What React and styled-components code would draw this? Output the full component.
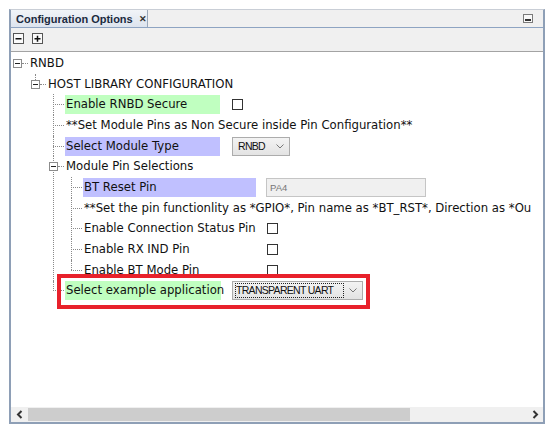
import styled, { createGlobalStyle } from "styled-components";

const GlobalStyle = createGlobalStyle`
  html, body { margin: 0; padding: 0; background: #ffffff; }
  body { font-family: "DejaVu Sans", Verdana, sans-serif; }
  *, *::before, *::after { box-sizing: border-box; }
`;

const Page = styled.div`
  padding: 9px 8px 0 9px;
`;

const Panel = styled.div`
  width: 536px;
  display: flex;
  flex-direction: column;
  border: 2px solid #8e9fb6;
  border-top: 1px solid #c9ced6;
  background: #ffffff;
`;

const Header = styled.div`
  height: 18px;
  display: flex;
  align-items: stretch;
  background: #f0f0f0;
  border-bottom: 1px solid #8ea4c2;
`;

const Tab = styled.div`
  width: 137px;
  display: flex;
  align-items: center;
  padding-left: 5px;
  white-space: nowrap;
  background: linear-gradient(#f1f4f8, #dde4ee);
  border-right: 1px solid #9aa8ba;
  font-family: "Liberation Sans", Arial, sans-serif;
  font-weight: bold;
  font-size: 11px;
  color: #1b2a40;
`;

const Close = styled.span`
  margin-left: 6px;
  font-size: 9px;
  color: #333;
`;

const HeaderSpacer = styled.div`
  flex: 1;
`;

const MinButton = styled.div`
  width: 20px;
  display: flex;
  align-items: center;
  justify-content: flex-start;
  padding-bottom: 1px;
`;

const Toolbar = styled.div`
  height: 24px;
  display: flex;
  align-items: center;
  gap: 8px;
  padding-left: 2px;
  background: #f0f0f0;
  border-bottom: 1px solid #a3a3a3;
`;

const ToolButton = styled.div`
  width: 11px;
  height: 11px;
  display: flex;
  margin-bottom: 2px;
`;

const Content = styled.div`
  height: 355px;
  overflow: hidden;
  background: #ffffff;
`;

const Tree = styled.ul`
  margin: 0;
  padding: 1px 0 0 0;
  white-space: nowrap;
`;

const Children = styled.ul`
  margin: 0;
  padding: 0 0 0 18px;
`;

const Item = styled.li`
  position: relative;
  list-style: none;
  &::before {
    content: "";
    display: ${(p) => (p.$root ? "none" : "block")};
    position: absolute;
    left: 6px;
    top: 0;
    bottom: 0;
    border-left: 1px dotted #8a8a8a;
  }
  &:last-child::before {
    bottom: auto;
    height: 10px;
  }
`;

const Row = styled.div`
  position: relative;
  height: 20.7px;
  display: flex;
  align-items: center;
  &::after {
    content: "";
    display: ${(p) => (p.$highlight ? "block" : "none")};
    position: absolute;
    left: 10px;
    top: -7px;
    width: 313px;
    height: 35px;
    border: 4px solid #e8212b;
    pointer-events: none;
  }
`;

const Gutter = styled.div`
  width: 18px;
  height: 100%;
  flex: none;
  display: flex;
  align-items: center;
`;

const Expander = styled.div`
  position: relative;
  z-index: 1;
  width: 9px;
  height: 9px;
  margin-left: 2px;
  flex: none;
  display: flex;
  align-items: center;
  justify-content: center;
  background: #ffffff;
  border: 1px solid #8c8c8c;
  &::before {
    content: "";
    width: 5px;
    height: 1px;
    background: #222;
  }
`;

const Dash = styled.div`
  flex: 1;
  margin-left: ${(p) => (p.$lead ? "6px" : "0")};
  margin-right: 1px;
  border-top: 1px dotted #8a8a8a;
`;

const Label = styled.span`
  flex: none;
  height: 19px;
  line-height: 19px;
  padding-left: 1px;
  width: ${(p) => (p.$width ? `${p.$width}px` : "auto")};
  background: ${(p) =>
    p.$tone === "green" ? "#c0ffc0" : p.$tone === "blue" ? "#c0c0ff" : "transparent"};
  font-size: 11.7px;
  color: #111;
`;

const Checkbox = styled.div`
  flex: none;
  width: 11px;
  height: 11px;
  margin-left: ${(p) => p.$gap}px;
  border: 1px solid #333;
  background: #ffffff;
`;

const Dropdown = styled.div`
  flex: none;
  width: ${(p) => p.$width}px;
  height: 19px;
  margin-left: ${(p) => p.$gap}px;
  display: flex;
  align-items: center;
  padding: 0 0 0 2px;
  border: 1px solid #acacac;
  background: linear-gradient(#f3f3f3, #e3e3e3);
`;

const DropText = styled.span`
  flex: 1;
  height: 15px;
  line-height: 13px;
  padding-left: ${(p) => (p.$focus ? "0" : "2px")};
  border: 1px dotted ${(p) => (p.$focus ? "#222" : "transparent")};
  font-family: "Liberation Sans", Arial, sans-serif;
  font-size: 10.5px;
  letter-spacing: -0.7px;
  color: #111;
`;

const DropArrow = styled.div`
  width: 18px;
  flex: none;
  display: flex;
  justify-content: center;
`;

const TextField = styled.div`
  flex: none;
  width: 160px;
  height: 19px;
  margin-left: ${(p) => p.$gap}px;
  padding-left: 3px;
  line-height: 17px;
  border: 1px solid #c5c5c5;
  background: #f0f0f0;
  font-family: "Liberation Sans", Arial, sans-serif;
  font-size: 9.5px;
  color: #777;
`;

const ScrollBar = styled.div`
  height: 15px;
  display: flex;
  align-items: stretch;
  background: #f0f0f0;
`;

const ScrollArrow = styled.div`
  width: 16px;
  flex: none;
  display: flex;
  align-items: center;
  justify-content: center;
`;

const Thumb = styled.div`
  width: 382px;
  margin: 1px 0 1px 1px;
  background: #cdcdcd;
`;

const Track = styled.div`
  flex: 1;
`;

const Chevron = () => (
  <svg width="8" height="5" viewBox="0 0 8 5">
    <path d="M0.5 0.5 L4 4 L7.5 0.5" fill="none" stroke="#777" strokeWidth="1" />
  </svg>
);

const Arrow = ({ dir }) => (
  <svg width="7" height="9" viewBox="0 0 7 9">
    <path
      d={dir === "left" ? "M5.5 1 L2 4.5 L5.5 8" : "M1.5 1 L5 4.5 L1.5 8"}
      fill="none"
      stroke="#333"
      strokeWidth="2"
    />
  </svg>
);

const Node = ({ label, tone, width, open, root, highlight, editor, children }) => (
  <Item $root={root}>
    <Row $highlight={highlight}>
      <Gutter>
        {open ? <Expander /> : null}
        <Dash $lead={!open} />
      </Gutter>
      <Label $tone={tone} $width={width}>
        {label}
      </Label>
      {editor}
    </Row>
    {children ? <Children>{children}</Children> : null}
  </Item>
);

export default function App() {
  return (
    <>
      <GlobalStyle />
      <Page>
        <Panel>
          <Header>
            <Tab>
              Configuration Options<Close>✕</Close>
            </Tab>
            <HeaderSpacer />
            <MinButton>
              <svg width="10" height="9" viewBox="0 0 10 9">
                <rect x="0.5" y="0.5" width="9" height="8" fill="#f8f8f8" stroke="#7a7a7a" />
                <rect x="2" y="5" width="6" height="2" fill="#333" />
              </svg>
            </MinButton>
          </Header>
          <Toolbar>
            <ToolButton>
              <svg width="11" height="11" viewBox="0 0 11 11">
                <rect x="0.5" y="0.5" width="10" height="10" fill="#fafafa" stroke="#555" />
                <rect x="2.5" y="5" width="6" height="1.5" fill="#111" />
              </svg>
            </ToolButton>
            <ToolButton>
              <svg width="11" height="11" viewBox="0 0 11 11">
                <rect x="0.5" y="0.5" width="10" height="10" fill="#fafafa" stroke="#555" />
                <rect x="2.5" y="5" width="6" height="1.5" fill="#111" />
                <rect x="4.75" y="2.75" width="1.5" height="6" fill="#111" />
              </svg>
            </ToolButton>
          </Toolbar>
          <Content>
            <Tree>
              <Node label="RNBD" open root>
                <Node label="HOST LIBRARY CONFIGURATION" open>
                  <Node
                    label="Enable RNBD Secure"
                    tone="green"
                    width={155}
                    editor={<Checkbox $gap={12} />}
                  />
                  <Node label="**Set Module Pins as Non Secure inside Pin Configuration**" />
                  <Node
                    label="Select Module Type"
                    tone="blue"
                    width={155}
                    editor={
                      <Dropdown $width={58} $gap={12}>
                        <DropText>RNBD</DropText>
                        <DropArrow>
                          <Chevron />
                        </DropArrow>
                      </Dropdown>
                    }
                  />
                  <Node label="Module Pin Selections" open>
                    <Node
                      label="BT Reset Pin"
                      tone="blue"
                      width={173}
                      editor={<TextField $gap={10}>PA4</TextField>}
                    />
                    <Node label="**Set the pin functionlity as *GPIO*, Pin name as *BT_RST*, Direction as *Ou" />
                    <Node
                      label="Enable Connection Status Pin"
                      width={173}
                      editor={<Checkbox $gap={11} />}
                    />
                    <Node label="Enable RX IND Pin" width={173} editor={<Checkbox $gap={11} />} />
                    <Node label="Enable BT Mode Pin" width={173} editor={<Checkbox $gap={11} />} />
                  </Node>
                  <Node
                    label="Select example application"
                    tone="green"
                    width={156}
                    highlight
                    editor={
                      <Dropdown $width={131} $gap={11}>
                        <DropText $focus>TRANSPARENT UART</DropText>
                        <DropArrow>
                          <Chevron />
                        </DropArrow>
                      </Dropdown>
                    }
                  />
                </Node>
              </Node>
            </Tree>
          </Content>
          <ScrollBar>
            <ScrollArrow>
              <Arrow dir="left" />
            </ScrollArrow>
            <Thumb />
            <Track />
            <ScrollArrow>
              <Arrow dir="right" />
            </ScrollArrow>
          </ScrollBar>
        </Panel>
      </Page>
    </>
  );
}
